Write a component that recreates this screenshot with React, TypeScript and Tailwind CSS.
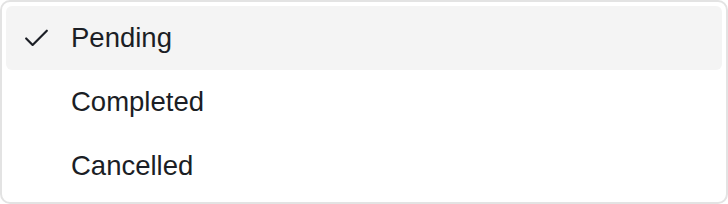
import { Check } from "lucide-react";

const options = [
  { label: "Pending", selected: true },
  { label: "Completed", selected: false },
  { label: "Cancelled", selected: false },
];

export default function App() {
  return (
    <div className="h-[204px] w-[728px] bg-white font-['Liberation_Sans',Arial,sans-serif]">
      <div className="flex h-full w-full flex-col rounded-[10px] border-2 border-[#e3e3e3] bg-white p-[4px]">
        {options.map((option) => (
          <div
            key={option.label}
            className={
              option.selected
                ? "flex h-[64px] items-center rounded-[6px] bg-[#f4f4f4] text-[#1b1e25]"
                : "flex h-[64px] items-center rounded-[6px] text-[#1b1e25]"
            }
          >
            <span className="flex w-[65px] shrink-0 items-center pl-[15px]">
              {option.selected ? (
                <Check size={31} strokeWidth={1.7} className="text-[#1b1e25]" />
              ) : null}
            </span>
            <span className="text-[27.5px] leading-none">{option.label}</span>
          </div>
        ))}
      </div>
    </div>
  );
}
